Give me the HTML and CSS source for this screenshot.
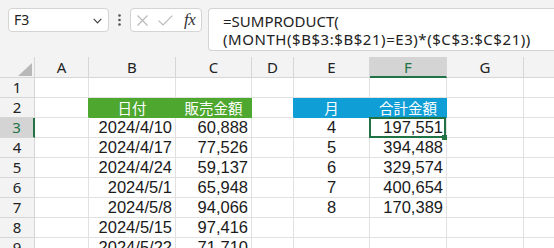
FILE: index.html
```html
<!DOCTYPE html>
<html lang="ja">
<head>
<meta charset="utf-8">
<link rel="stylesheet" href="styles.css">
</head>
<body>
<div class="fbar">
  <div class="namebox"><span>F3</span>
    <svg class="chev" width="9" height="6" viewBox="0 0 9 6"><path d="M0.7 0.8 L4.5 4.8 L8.3 0.8" fill="none" stroke="#444" stroke-width="1.2"/></svg>
  </div>
  <div class="dots">
    <svg width="3" height="12" viewBox="0 0 3 12"><circle cx="1.5" cy="1.5" r="1.3" fill="#555"/><circle cx="1.5" cy="6" r="1.3" fill="#555"/><circle cx="1.5" cy="10.5" r="1.3" fill="#555"/></svg>
  </div>
  <div class="fxbox">
    <svg class="ico-x" width="11" height="11" viewBox="0 0 11 11"><path d="M0.5 0.5 L10.5 10.5 M10.5 0.5 L0.5 10.5" stroke="#b8b8b8" stroke-width="1.1" fill="none"/></svg>
    <svg class="ico-ok" width="15" height="11" viewBox="0 0 15 11"><path d="M0.6 5.6 L5 10 L14.4 0.6" stroke="#b8b8b8" stroke-width="1.1" fill="none"/></svg>
    <span class="fx">fx</span>
  </div>
  <div class="formula"><div>=SUMPRODUCT(</div><div class="l2">(MONTH($B$3:$B$21)=E3)*($C$3:$C$21))</div></div>
</div>
<div class="sheet">
  <div class="h corner"><svg width="14" height="13" viewBox="0 0 14 13"><path d="M14 0 L14 13 L0 13 Z" fill="#b8b8b8"/></svg></div>
  <div class="h">A</div><div class="h">B</div><div class="h">C</div><div class="h">D</div><div class="h">E</div><div class="h hsel-col">F</div><div class="h">G</div><div class="h"></div>

  <div class="h rh">1</div><div class="c"></div><div class="c"></div><div class="c"></div><div class="c"></div><div class="c"></div><div class="c"></div><div class="c"></div><div class="c"></div>

  <div class="h rh">2</div><div class="c edge-g"></div><div class="c jp green">日付</div><div class="c jp green">販売金額</div><div class="c edge-b"></div><div class="c jp blue">月</div><div class="c jp blue">合計金額</div><div class="c"></div><div class="c"></div>

  <div class="h rh hsel-row">3</div><div class="c"></div><div class="c r">2024/4/10</div><div class="c r">60,888</div><div class="c"></div><div class="c m">4</div><div class="c r sel">197,551</div><div class="c"></div><div class="c"></div>

  <div class="h rh">4</div><div class="c"></div><div class="c r">2024/4/17</div><div class="c r">77,526</div><div class="c"></div><div class="c m">5</div><div class="c r">394,488</div><div class="c"></div><div class="c"></div>

  <div class="h rh">5</div><div class="c"></div><div class="c r">2024/4/24</div><div class="c r">59,137</div><div class="c"></div><div class="c m">6</div><div class="c r">329,574</div><div class="c"></div><div class="c"></div>

  <div class="h rh">6</div><div class="c"></div><div class="c r">2024/5/1</div><div class="c r">65,948</div><div class="c"></div><div class="c m">7</div><div class="c r">400,654</div><div class="c"></div><div class="c"></div>

  <div class="h rh">7</div><div class="c"></div><div class="c r">2024/5/8</div><div class="c r">94,066</div><div class="c"></div><div class="c m">8</div><div class="c r">170,389</div><div class="c"></div><div class="c"></div>

  <div class="h rh">8</div><div class="c"></div><div class="c r">2024/5/15</div><div class="c r">97,416</div><div class="c"></div><div class="c"></div><div class="c"></div><div class="c"></div><div class="c"></div>

  <div class="h rh">9</div><div class="c"></div><div class="c r">2024/5/22</div><div class="c r">71,710</div><div class="c"></div><div class="c"></div><div class="c"></div><div class="c"></div><div class="c"></div>
</div>
</body>
</html>
```

FILE: styles.css
```css
* { box-sizing: border-box; margin: 0; padding: 0; }
html, body { width: 554px; height: 248px; overflow: hidden; }
body { background: #f3f3f3; font-family: "Noto Sans", "Open Sans", sans-serif; color: #222; }

.fbar { display: flex; align-items: flex-start; height: 57px; padding: 8px 0 0 8px; }
.namebox { width: 101px; height: 24px; background: #fff; border: 1px solid #d4d4d4; border-radius: 4px;
  display: flex; align-items: center; justify-content: space-between; padding: 0 6px 0 5px;
  font-size: 14px; line-height: 22px; color: #222; }
.chev { display: block; margin-top: 1px; }
.dots { width: 21px; height: 24px; display: flex; align-items: center; justify-content: center; }
.dots svg { display: block; }
.fxbox { width: 72px; height: 24px; background: #fff; border: 1px solid #d4d4d4; border-radius: 4px;
  display: flex; align-items: center; padding-left: 6px; margin-right: 6px; }
.ico-x { display: block; margin-right: 10px; }
.ico-ok { display: block; margin-right: 11px; }
.fx { font-family: "Liberation Serif", serif; font-style: italic; font-size: 17px; line-height: 20px; color: #333; letter-spacing: -0.5px; }
.formula { flex: 1; height: 43px; background: #fff; border: 1px solid #d4d4d4; border-right: none;
  border-radius: 4px 0 0 4px; padding: 3px 0 0 14px; font-size: 15px; line-height: 18px; color: #222; white-space: nowrap; }
.l2 { letter-spacing: 0.55px; }

.sheet { display: grid; background: #fff;
  grid-template-columns: 35px 54px 87px 76px 42px 76px 77px 77px 40px;
  grid-template-rows: 21px repeat(9, 20px); }

.c { border-right: 1px solid #e1e1e1; border-bottom: 1px solid #e1e1e1; padding: 0 3px;
  font-family: "Liberation Sans", Arial, sans-serif; font-size: 16.5px; line-height: 19px; color: #1a1a1a;
  white-space: nowrap; overflow: hidden; }
.r { text-align: right; }
.m { text-align: center; }

.h { background: #f3f3f3; border-right: 1px solid #d6d6d6; border-bottom: 1px solid #d6d6d6;
  font-family: "Noto Sans", sans-serif; font-size: 15px; line-height: 20px; text-align: center; color: #222; }
.rh { line-height: 19px; }
.corner { display: flex; align-items: flex-end; justify-content: flex-end; padding: 0 2px 1px 0; }
.corner svg { display: block; }
.hsel-col { background: #d4d4d4; color: #217346; border-bottom: 2px solid #217346; }
.hsel-row { background: #d4d4d4; color: #217346; border-right: 2px solid #217346; }

.jp { font-family: "Noto Sans CJK JP", sans-serif; font-size: 14.5px; color: #fff; text-align: center; }
.green { background: #4ea72e; border-color: #4ea72e; }
.blue { background: #0f9ed5; border-color: #0f9ed5; }
.edge-g { border-right-color: #4ea72e; }
.edge-b { border-right-color: #0f9ed5; }

.sel { position: relative; overflow: visible; }
.sel::after { content: ""; position: absolute; left: -1px; top: -1px; right: 0; bottom: -1px; border: 2px solid #217346; }
.sel::before { content: ""; position: absolute; right: -1px; bottom: -3px; width: 5px; height: 5px; background: #217346; z-index: 1; }
```
